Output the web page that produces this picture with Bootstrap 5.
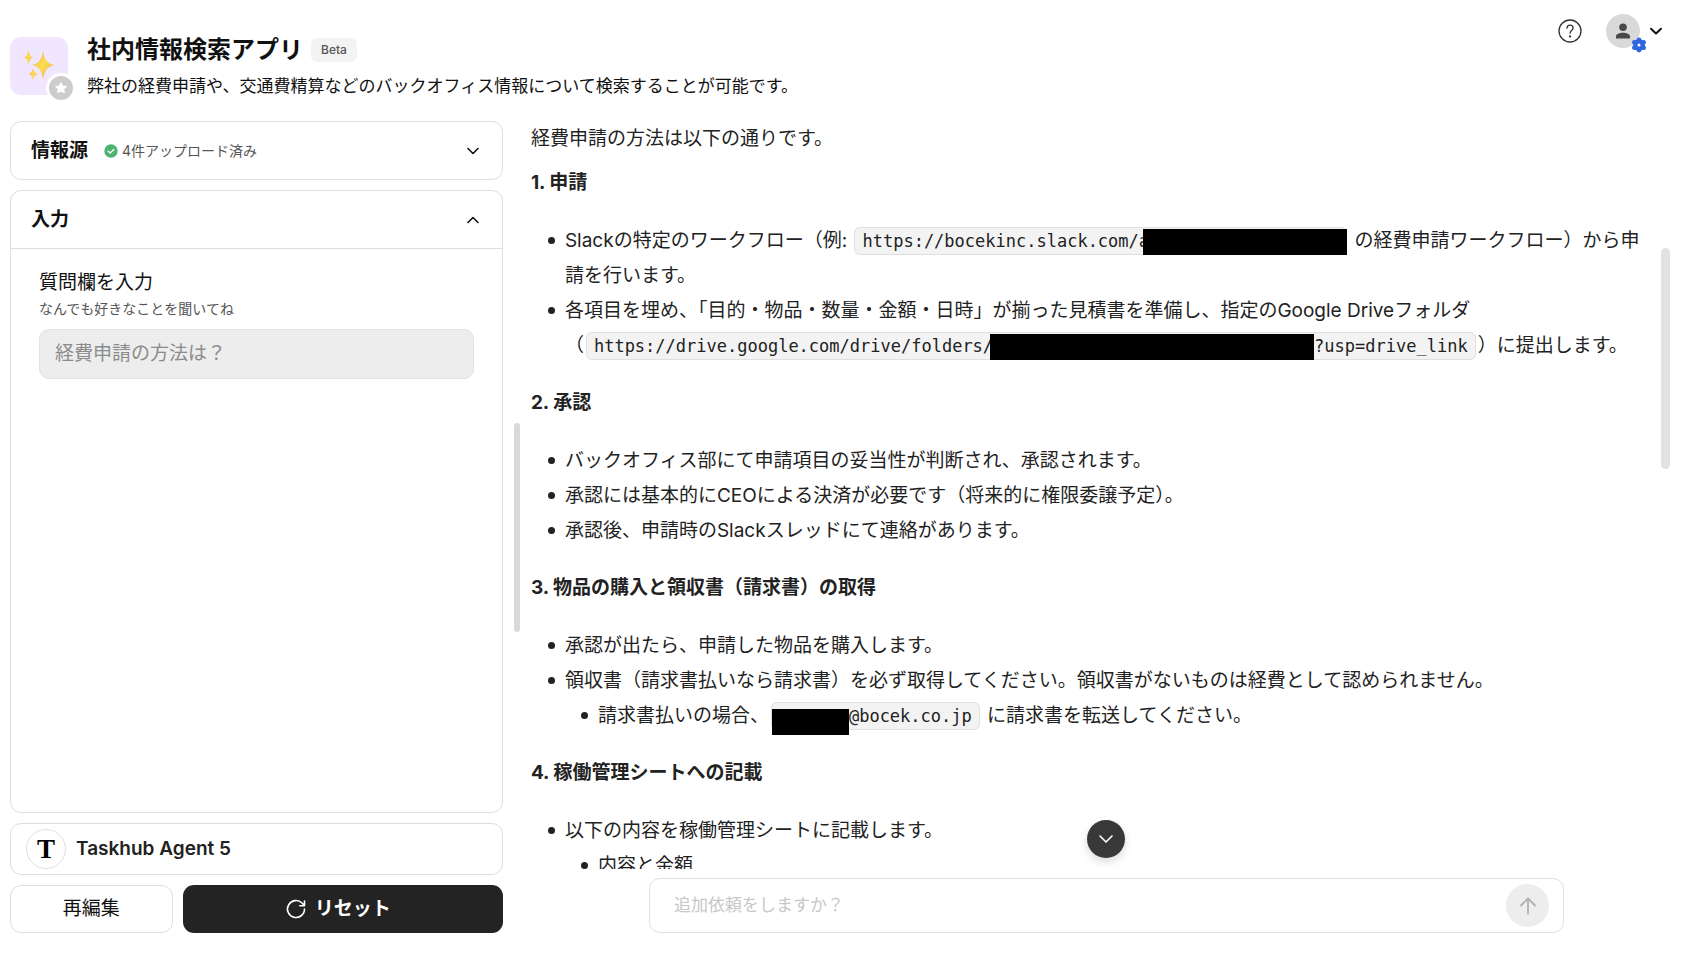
<!DOCTYPE html>
<html lang="ja">
<head>
<meta charset="utf-8">
<meta name="viewport" content="width=device-width, initial-scale=1">
<title>社内情報検索アプリ</title>
<link href="https://cdn.jsdelivr.net/npm/bootstrap@5.3.0/dist/css/bootstrap.min.css" rel="stylesheet">
<style>
  body { font-family: Inter, "Noto Sans CJK JP", sans-serif; color: #111; font-size: 19px; background: #fff; }
  .app-header { padding: 10px 18px 0 10px; height: 121px; }
  .app-icon { width: 58px; height: 58px; border-radius: 11px; background: #f0e6ff; margin-top: 27px; }
  .star-badge { right: -8px; bottom: -8px; width: 30px; height: 30px; border: 3px solid #fff; background: #ccc; }
  .app-heading { padding: 23px 0 0 19px; }
  .app-title { font-size: 24px; font-weight: 700; line-height: 34px; color: #111; }
  .beta-tag { font-size: 12px; font-weight: 500; line-height: 24px; padding: 0 10px; border-radius: 6px; background: #f3f3f3; color: #555; }
  .app-desc { font-size: 17px; line-height: 26px; margin: 6px 0 0; }
  .icon-btn { padding: 0; border: 0; background: none; line-height: 0; color: #111; }
  .avatar { width: 34px; height: 34px; background: #d9d9d9; }
  .gear { right: -7px; bottom: -5px; }
  .side { width: 29.9%; padding-left: 10px; gap: 10px; }
  .panel { border: 1px solid #dedede; border-radius: 11px; background: #fff; }
  .panel-head { height: 57px; padding: 0 21px 0 20px; width: 100%; background: none; border: 0; text-align: left; color: #111; }
  .panel-title { font-weight: 700; line-height: 28px; }
  .muted-note { font-size: 14px; line-height: 20px; color: #555; }
  .panel-body { border-top: 1px solid #dedede; padding: 20px 28px; }
  .ask-note { margin: 1px 0 10px; }
  .ask-input { height: 50px; border: 1px solid #e2e2e2; border-radius: 10px; background: #ededed !important; font-size: 19px; padding: 0 15px; }
  .ask-input::placeholder { color: #8b8b8b; }
  .agent { height: 52px; padding: 0 15px; gap: 10px; font-weight: 600; color: #222; }
  .agent-logo { width: 40px; height: 40px; border: 1px solid #dedede; font: 700 27px "Liberation Serif", serif; color: #000; }
  .actions { gap: 10px; }
  .act { height: 48px; border-radius: 11px; font-size: 19px; padding: 0; }
  .act-edit { flex: 0 0 33%; border: 1px solid #dedede; background: #fff; color: #111; }
  .act-reset { background: #232323; color: #fff; font-weight: 700; padding-right: 10px; }
  .work { min-height: 0; padding-bottom: 35px; }
  .grip { width: 6px; height: 209px; margin: 0 11px; border-radius: 3px; background: #d9d9d9; }
  .chat { min-width: 0; }
  .answer { color: #222; line-height: 35px; padding-right: 30px; }
  .answer p { margin: 0 0 9px; }
  .answer h2 { font-size: 19px; font-weight: 700; line-height: 35px; margin: 0 0 23px; }
  .answer ul { margin: 0 0 22px; padding-left: 34px; list-style: none; }
  .answer ul ul { margin: 0; padding-left: 33px; }
  .answer li::before { content: ""; display: inline-block; width: 7px; height: 7px; margin: 0 10px 0 -17px; border-radius: 50%; background: #222; vertical-align: 3px; }
  .answer code { font-family: "DejaVu Sans Mono", monospace; font-size: 17px; line-height: 20px; color: #222; background: #f3f3f3; border: 1px solid #e0e0e0; border-radius: 6px; padding: 3px 7px; margin: 0 2px; white-space: nowrap; }
  .redact { display: inline-block; height: 26px; margin: -4px 0; background: #000; vertical-align: middle; }
  .redact-end { width: 204px; margin-left: -6px; margin-right: -8px; }
  .redact-mid { width: 324px; margin-left: -3px; }
  .redact-start { width: 77px; margin-left: -7px; vertical-align: -9px; }
  .scroll-thumb { right: 12px; top: 17%; width: 9px; height: 221px; border-radius: 5px; background: #e2e2e2; }
  .to-end { left: 50%; bottom: 11px; width: 38px; height: 38px; border: 0; padding: 0; background: #383838; color: #fff; box-shadow: 0 4px 8px rgba(0,0,0,.15); line-height: 0; }
  .follow { width: 79.5%; height: 55px; margin-top: 9px; border: 1px solid #e0e0e0; border-radius: 11px; padding: 0 14px 0 24px; }
  .follow input { font-size: 17px; }
  .follow input::placeholder { color: #c8c8c8; }
  .send { width: 43px; height: 43px; border: 0; padding: 0; background: #ededed; color: #b0b0b0; line-height: 0; }
</style>
</head>
<body>
<div class="vh-100 d-flex flex-column overflow-hidden">
  <header class="app-header d-flex align-items-start flex-shrink-0">
    <div class="app-icon position-relative flex-shrink-0 d-flex align-items-center justify-content-center">
      <svg width="32" height="32" viewBox="0 0 32 32" aria-hidden="true">
        <defs><linearGradient id="gold" x1="0" y1="0" x2="1" y2="1"><stop offset="0" stop-color="#f0a860"/><stop offset=".5" stop-color="#fbdf4e"/><stop offset="1" stop-color="#e9a06a"/></linearGradient></defs>
        <g fill="url(#gold)">
          <path d="M20 1Q21.500 13.500 31.500 15Q21.500 16.500 20 29Q18.500 16.500 9 15Q18.500 13.500 20 1Z"/>
          <path d="M5.500 0Q6.300 6.500 10 7.500Q6.300 8.500 5.500 15Q4.700 8.500 1 7.500Q4.700 6.500 5.500 0Z"/>
          <path d="M10 18Q10.900 23 15 24Q10.900 25 10 30Q9.100 25 5.500 24Q9.100 23 10 18Z"/>
        </g>
      </svg>
      <span class="star-badge position-absolute rounded-circle d-flex align-items-center justify-content-center">
        <svg width="14" height="14" viewBox="0 0 14 14" fill="#fff" stroke="#fff" stroke-linejoin="round"><path d="M7 1.500l1.700 3.500 3.800.5-2.800 2.600.7 3.800L7 10.100l-3.400 1.800.7-3.800L1.500 5.500 5.300 5z"/></svg>
      </span>
    </div>
    <div class="app-heading flex-grow-1">
      <div class="d-flex align-items-center gap-2">
        <h1 class="app-title m-0">社内情報検索アプリ</h1>
        <span class="beta-tag">Beta</span>
      </div>
      <p class="app-desc">弊社の経費申請や、交通費精算などのバックオフィス情報について検索することが可能です。</p>
    </div>
    <div class="d-flex align-items-center mt-1">
      <button type="button" class="icon-btn me-4" aria-label="ヘルプ">
        <svg width="24" height="24" viewBox="0 0 24 24" fill="none" stroke="#333" stroke-width="1.300" stroke-linecap="round"><circle cx="12" cy="12" r="11"/><path d="M9 9.200C9 7.300 10.300 6.200 12 6.200s3.100 1.100 3.100 2.900c0 2.400-3 2.600-3 5.100"/><circle cx="12" cy="17.500" r=".5" fill="#333"/></svg>
      </button>
      <button type="button" class="icon-btn d-flex align-items-center" aria-label="アカウント">
        <span class="avatar rounded-circle position-relative d-flex align-items-center justify-content-center">
          <svg width="16" height="16" viewBox="0 0 16 16" fill="#484848"><circle cx="8" cy="4.300" r="3.800"/><path d="M1 15.500v-2C1 11 4.500 9.800 8 9.800s7 1.200 7 3.700v2z"/></svg>
          <svg class="gear position-absolute" width="16" height="16" viewBox="0 0 16 16" fill="#2f66e0"><circle cx="8" cy="8" r="5.900"/><circle cx="8" cy="2.900" r="2.400"/><circle cx="8" cy="13.100" r="2.400"/><circle cx="3.400" cy="5.300" r="2.400"/><circle cx="12.600" cy="5.300" r="2.400"/><circle cx="3.400" cy="10.700" r="2.400"/><circle cx="12.600" cy="10.700" r="2.400"/><circle cx="8" cy="8" r="1.500" fill="#fff"/></svg>
        </span>
        <svg class="ms-2" width="16" height="16" viewBox="0 0 16 16" fill="none" stroke="currentColor" stroke-width="2" stroke-linecap="round" stroke-linejoin="round"><path d="M3 5.800l5 4.700 5-4.700"/></svg>
      </button>
    </div>
  </header>

  <main class="work d-flex flex-grow-1">
    <section class="side d-flex flex-column flex-shrink-0">
      <div class="panel">
        <button type="button" class="panel-head d-flex align-items-center" aria-expanded="false">
          <span class="panel-title">情報源</span>
          <svg class="ms-3 me-1" width="14" height="14" viewBox="0 0 14 14"><circle cx="7" cy="7" r="6.700" fill="#4db36e"/><path d="M4.200 7.200l2 1.900 3.600-3.700" fill="none" stroke="#fff" stroke-width="1.400" stroke-linecap="round" stroke-linejoin="round"/></svg>
          <span class="muted-note">4件アップロード済み</span>
          <svg class="ms-auto" width="16" height="16" viewBox="0 0 16 16" fill="none" stroke="currentColor" stroke-width="1.600" stroke-linecap="round" stroke-linejoin="round"><path d="M3 5.500l5 5 5-5"/></svg>
        </button>
      </div>
      <div class="panel flex-grow-1">
        <button type="button" class="panel-head d-flex align-items-center" aria-expanded="true">
          <span class="panel-title">入力</span>
          <svg class="ms-auto" width="16" height="16" viewBox="0 0 16 16" fill="none" stroke="currentColor" stroke-width="1.600" stroke-linecap="round" stroke-linejoin="round"><path d="M3 10.500l5-5 5 5"/></svg>
        </button>
        <div class="panel-body">
          <label for="question" class="d-block">質問欄を入力</label>
          <div class="muted-note ask-note" id="question-note">なんでも好きなことを聞いてね</div>
          <input id="question" class="form-control ask-input" type="text" placeholder="経費申請の方法は？" aria-describedby="question-note" disabled>
        </div>
      </div>
      <div class="panel agent d-flex align-items-center">
        <span class="agent-logo rounded-circle d-flex align-items-center justify-content-center">T</span>
        <span>Taskhub Agent 5</span>
      </div>
      <div class="actions d-flex">
        <button type="button" class="btn act act-edit">再編集</button>
        <button type="button" class="btn act act-reset flex-grow-1 d-flex align-items-center justify-content-center">
          <svg class="me-2" width="22" height="22" viewBox="0 0 22 22" fill="none" stroke="currentColor" stroke-width="1.600" stroke-linecap="round" stroke-linejoin="round"><path d="M19.500 11a8.500 8.500 0 1 1-2.500-6l2.500 2.700M19.500 3v4.700h-4.700"/></svg>
          リセット
        </button>
      </div>
    </section>

    <div class="grip align-self-center flex-shrink-0"></div>

    <section class="chat d-flex flex-column flex-grow-1">
      <div class="position-relative flex-grow-1 overflow-hidden">
        <article class="answer">
          <p>経費申請の方法は以下の通りです。</p>
          <h2>1. 申請</h2>
          <ul>
            <li>Slackの特定のワークフロー（例: <code>https://bocekinc.slack.com/a<span class="redact redact-end"></span></code> の経費申請ワークフロー）から申請を行います。</li>
            <li>各項目を埋め、「目的・物品・数量・金額・日時」が揃った見積書を準備し、指定のGoogle Driveフォルダ（<code>https://drive.google.com/drive/folders/<span class="redact redact-mid"></span>?usp=drive_link</code>）に提出します。</li>
          </ul>
          <h2>2. 承認</h2>
          <ul>
            <li>バックオフィス部にて申請項目の妥当性が判断され、承認されます。</li>
            <li>承認には基本的にCEOによる決済が必要です（将来的に権限委譲予定）。</li>
            <li>承認後、申請時のSlackスレッドにて連絡があります。</li>
          </ul>
          <h2>3. 物品の購入と領収書（請求書）の取得</h2>
          <ul>
            <li>承認が出たら、申請した物品を購入します。</li>
            <li>領収書（請求書払いなら請求書）を必ず取得してください。領収書がないものは経費として認められません。
              <ul><li>請求書払いの場合、<code><span class="redact redact-start"></span>@bocek.co.jp</code> に請求書を転送してください。</li></ul>
            </li>
          </ul>
          <h2>4. 稼働管理シートへの記載</h2>
          <ul>
            <li>以下の内容を稼働管理シートに記載します。
              <ul><li>内容と金額</li></ul>
            </li>
          </ul>
        </article>
        <div class="scroll-thumb position-absolute"></div>
        <button type="button" class="to-end position-absolute translate-middle-x rounded-circle" aria-label="最下部へ">
          <svg width="18" height="18" viewBox="0 0 18 18" fill="none" stroke="currentColor" stroke-width="1.600" stroke-linecap="round" stroke-linejoin="round"><path d="M3 6l6 6 6-6"/></svg>
        </button>
      </div>
      <form class="follow d-flex align-items-center align-self-center flex-shrink-0">
        <input type="text" class="form-control border-0 p-0 shadow-none" placeholder="追加依頼をしますか？" aria-label="追加依頼">
        <button type="button" class="send rounded-circle flex-shrink-0" aria-label="送信">
          <svg width="22" height="22" viewBox="0 0 22 22" fill="none" stroke="currentColor" stroke-width="1.800" stroke-linecap="round" stroke-linejoin="round"><path d="M11 18.500V3.500M4 10.500l7-7 7 7"/></svg>
        </button>
      </form>
    </section>
  </main>
</div>
<script src="https://cdn.jsdelivr.net/npm/bootstrap@5.3.0/dist/js/bootstrap.bundle.min.js"></script>
</body>
</html>
